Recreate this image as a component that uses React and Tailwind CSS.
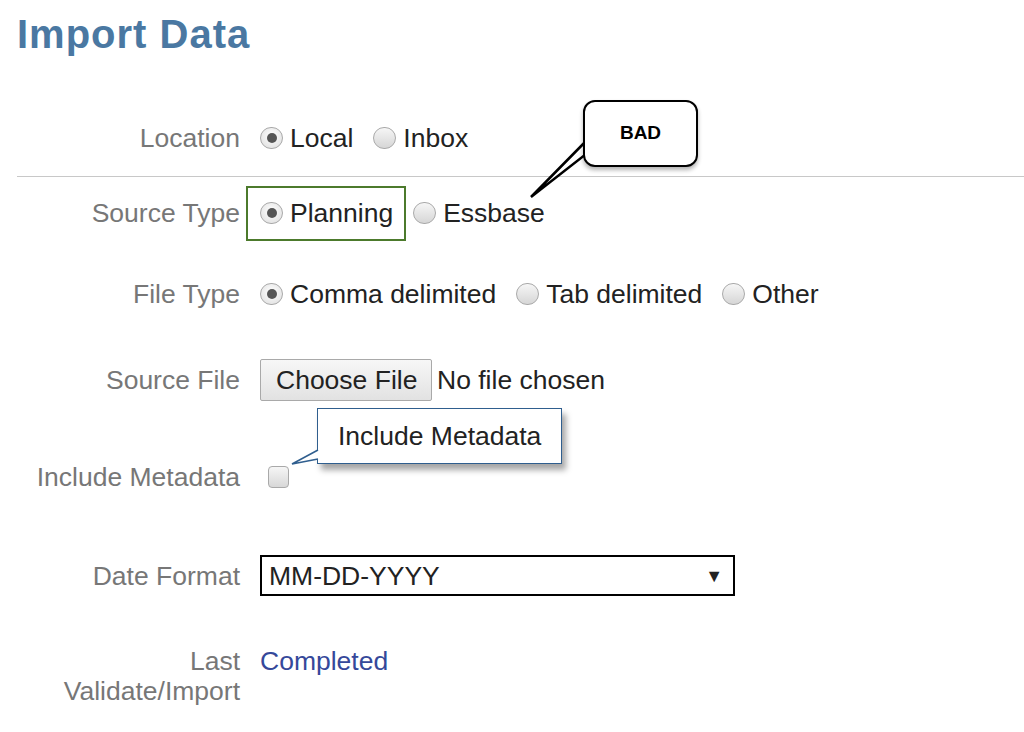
import React from "react";

function Radio({ checked }) {
  return (
    <span
      className={
        "relative inline-block w-[23px] h-[22px] rounded-full border border-[#a9a9a9] shrink-0 " +
        (checked
          ? "bg-[radial-gradient(circle_at_50%_40%,#ffffff,#dcdcdc)]"
          : "bg-[linear-gradient(#f6f6f6,#d6d6d6)]")
      }
    >
      {checked && (
        <span className="absolute left-1/2 top-1/2 w-[10px] h-[10px] -translate-x-1/2 -translate-y-1/2 rounded-full bg-[#555]" />
      )}
    </span>
  );
}

function Option({ checked, label, first }) {
  return (
    <span className={"flex items-center gap-[7px] " + (first ? "" : "ml-[20px]")}>
      <Radio checked={checked} />
      <span className="text-[#222]">{label}</span>
    </span>
  );
}

function Row({ label, children, className = "", h = "h-[40px]" }) {
  return (
    <div className={"flex items-center " + h + " " + className}>
      <div className="w-[240px] text-right text-[#777] shrink-0">{label}</div>
      <div className="ml-[20px] flex items-center">{children}</div>
    </div>
  );
}

export default function App() {
  return (
    <div
      className="relative w-[1024px] h-[732px] bg-white overflow-hidden text-[26.5px] leading-[30px]"
      style={{ fontFamily: '"Liberation Sans", Arial, sans-serif' }}
    >
      <h1 className="pl-[17px] pt-[10px] text-[40px] leading-[48px] font-bold tracking-[1px] text-[#4a78a2]">
        Import Data
      </h1>

      <Row label="Location" className="mt-[60px]">
        <Option checked label="Local" first />
        <Option label="Inbox" />
      </Row>

      <div className="ml-[17px] mt-[18px] h-px bg-[#c8c8c8]" />

      <Row label="Source Type" className="mt-[16px]">
        <Option checked label="Planning" first />
        <span className="ml-[20px]" />
        <Option label="Essbase" first />
      </Row>

      <Row label="File Type" className="mt-[41px]">
        <Option checked label="Comma delimited" first />
        <Option label="Tab delimited" />
        <Option label="Other" />
      </Row>

      <Row label="Source File" className="mt-[45px]" h="h-[42px]">
        <button className="w-[172px] h-[42px] border border-[#a9a9a9] rounded-[2px] bg-[linear-gradient(#f7f7f7,#e2e2e2)] text-[#222] text-left pl-[15px]">
          Choose File
        </button>
        <span className="ml-[5px] text-[#222]">No file chosen</span>
      </Row>

      <Row label="Include Metadata" className="mt-[56px]">
        <span className="ml-[8px] inline-block w-[21px] h-[22px] rounded-[4px] border border-[#a9a9a9] bg-[linear-gradient(#f6f6f6,#d8d8d8)]" />
      </Row>

      <Row label="Date Format" className="mt-[58px]" h="h-[41px]">
        <div className="w-[475px] h-[41px] border-2 border-black flex items-center justify-between pl-[7px] pr-[10px] text-[#222]">
          <span>MM-DD-YYYY</span>
          <span className="text-[18px]">▼</span>
        </div>
      </Row>

      <div className="flex mt-[50px]">
        <div className="w-[240px] text-right text-[#777] shrink-0">
          Last
          <br />
          Validate/Import
        </div>
        <div className="ml-[20px] text-[#35489a]">Completed</div>
      </div>

      {/* Green highlight box */}
      <div className="absolute left-[246px] top-[186px] w-[160px] h-[55px] border-2 border-[#4c7a2c]" />

      {/* BAD callout tail */}
      <svg className="absolute left-0 top-0 pointer-events-none" width="1024" height="732">
        <polygon points="590,137 531,197 590,151" fill="white" stroke="black" strokeWidth="2.5" strokeLinejoin="miter" />
      </svg>

      {/* BAD callout */}
      <div className="absolute left-[583px] top-[100px] w-[115px] h-[67px] border-2 border-black rounded-[12px] bg-white shadow-[0_3px_4px_rgba(0,0,0,0.3)] flex items-start justify-center pt-[20px]">
        <span className="text-[19px] leading-[22px] font-bold text-black">BAD</span>
      </div>

      {/* Include Metadata tooltip */}
      <div className="absolute left-[317px] top-[408px] w-[245px] h-[56px] border-[1.5px] border-[#2f5e8e] bg-white shadow-[4px_6px_6px_rgba(0,0,0,0.35)] flex items-center pl-[20px] text-[#222]">
        Include Metadata
      </div>
      <svg className="absolute left-0 top-0 pointer-events-none" width="1024" height="732">
        <polygon points="318,450 292,464 318,459" fill="white" stroke="none" />
        <polyline points="318,450 292,464 318,459" fill="none" stroke="#2f5e8e" strokeWidth="1.5" />
      </svg>
    </div>
  );
}
